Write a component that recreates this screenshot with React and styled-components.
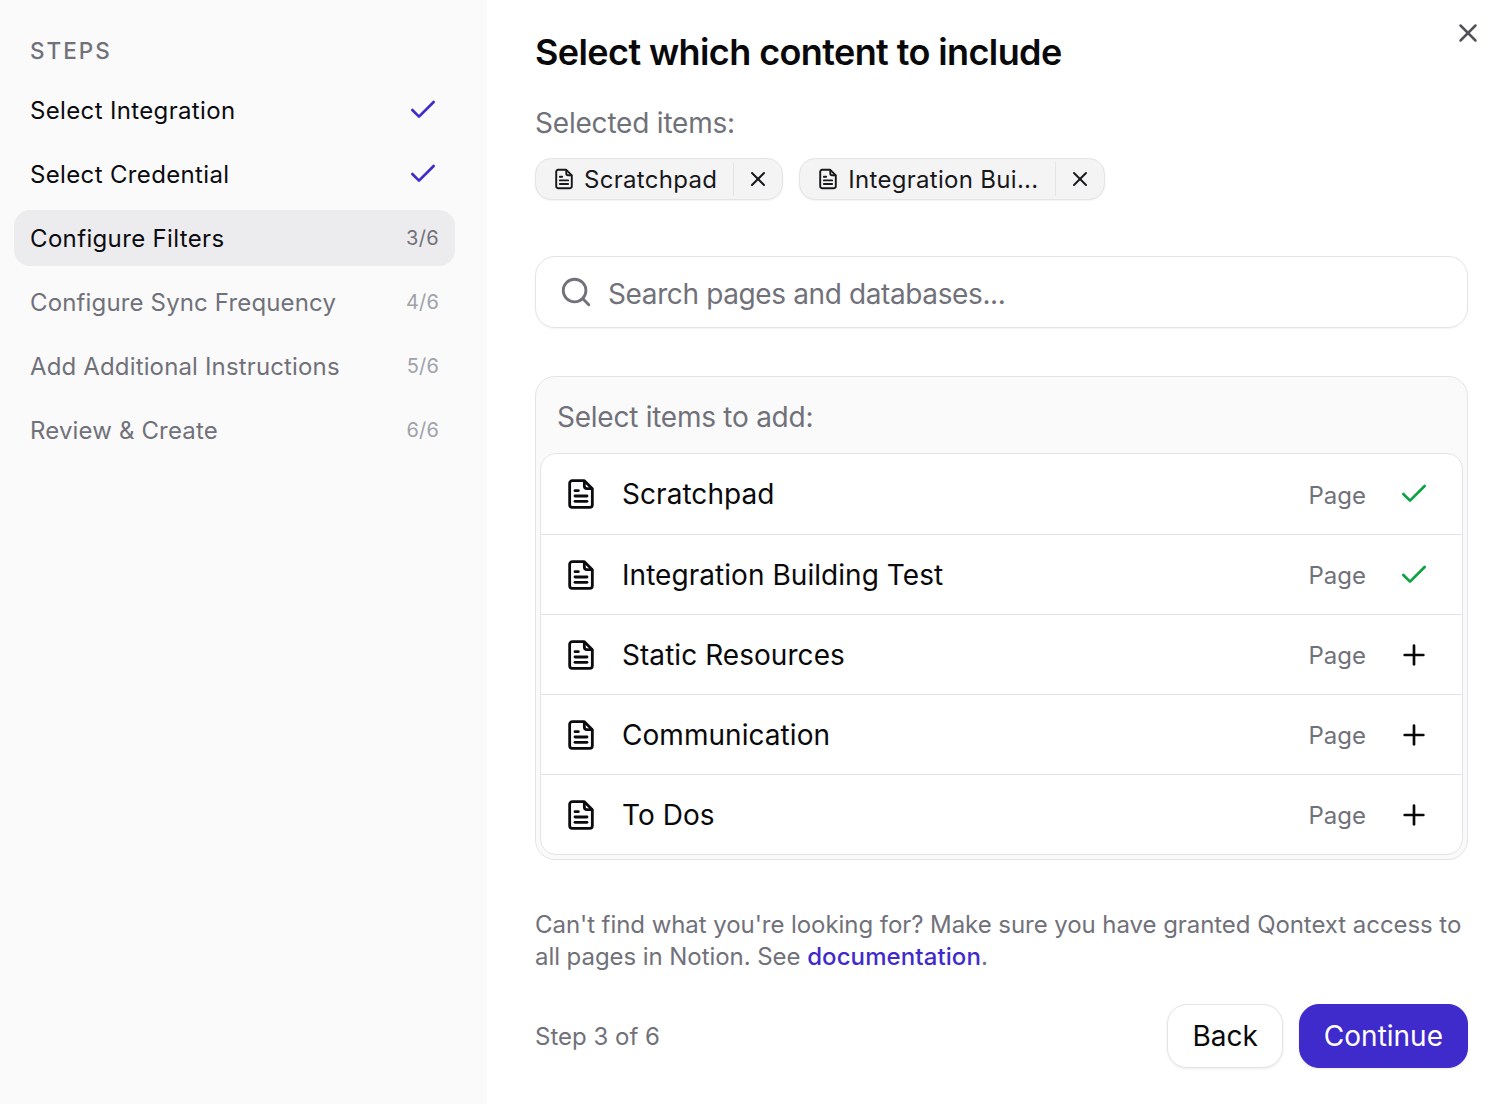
import styled, { createGlobalStyle } from "styled-components";
import { Check, Plus, Search, X } from "lucide-react";

const GlobalStyle = createGlobalStyle`
  * {
    box-sizing: border-box;
  }
  body {
    margin: 0;
    background: #fff;
    font-family: Inter, "Liberation Sans", sans-serif;
    color: #0b0b0f;
  }
`;

const Page = styled.div`
  display: flex;
  height: 1104px;
  position: relative;
  overflow: hidden;
`;

/* Left column */
const Sidebar = styled.aside`
  width: 487px;
  flex-shrink: 0;
  background: #fafafa;
  padding: 34px 32px 0 14px;
`;

const StepsTitle = styled.h2`
  margin: 0 0 14px 16px;
  font-size: 22.5px;
  line-height: 34px;
  font-weight: 500;
  letter-spacing: 2px;
  color: #71717a;
`;

const StepList = styled.div`
  display: flex;
  flex-direction: column;
  gap: 8px;
`;

const StepRow = styled.div`
  height: 56px;
  padding: 0 16px;
  display: flex;
  align-items: center;
  justify-content: space-between;
  border-radius: 16px;
  font-size: 24px;
  letter-spacing: ${(props) => (props.$muted ? "0.15px" : "0.35px")};
  color: ${(props) => (props.$muted ? "#71717a" : "#0b0b0f")};
  background: ${(props) => (props.$active ? "#ececee" : "transparent")};
`;

const StepCount = styled.span`
  font-size: 20px;
  color: ${(props) => (props.$muted ? "#a1a1aa" : "#71717a")};
`;

const StepCheck = styled(Check)`
  width: 32px;
  height: 32px;
  color: #3f2bcb;
`;

/* Right column */
const Main = styled.main`
  flex: 1;
  padding: 28px 39px 0 48px;
  display: flex;
  flex-direction: column;
`;

const Heading = styled.h1`
  margin: 0;
  font-size: 36px;
  line-height: 48px;
  font-weight: 600;
  letter-spacing: -0.6px;
  color: #09090b;
`;

const CloseButton = styled.button`
  position: absolute;
  top: 16px;
  right: 22px;
  width: 34px;
  height: 34px;
  padding: 0;
  border: 0;
  background: none;
  color: #52525b;
  display: flex;
  align-items: center;
  justify-content: center;
`;

const SelectedLabel = styled.div`
  margin-top: 27px;
  font-size: 28px;
  line-height: 40px;
  letter-spacing: -0.2px;
  color: #71717a;
`;

const Chips = styled.div`
  margin-top: 15px;
  display: flex;
  gap: 16px;
`;

const Chip = styled.div`
  height: 42px;
  padding: 0 12px 0 17px;
  display: flex;
  align-items: center;
  background: #f4f4f5;
  border: 1px solid #e4e4e7;
  border-radius: 16px;
  box-shadow: 0 1px 2px rgba(0, 0, 0, 0.05);
  font-size: 24px;
  color: #18181b;
`;

const ChipLabel = styled.span`
  margin-left: 9px;
  padding-right: 16px;
  letter-spacing: 0.3px;
`;

const ChipRemove = styled.span`
  height: 34px;
  padding-left: 12px;
  border-left: 1px solid #e4e4e7;
  display: flex;
  align-items: center;
  color: #18181b;
`;

const SearchBox = styled.div`
  margin-top: 56px;
  height: 72px;
  padding: 0 23px;
  display: flex;
  align-items: center;
  gap: 15px;
  border: 1px solid #e4e4e7;
  border-radius: 20px;
  box-shadow: 0 1px 2px rgba(0, 0, 0, 0.05);
  color: #71717a;
`;

const SearchText = styled.span`
  padding-top: 3px;
  font-size: 28px;
  letter-spacing: -0.38px;
`;

const Panel = styled.section`
  margin-top: 48px;
  height: 484px;
  padding: 0 4px 4px;
  display: flex;
  flex-direction: column;
  background: #fafafa;
  border: 1px solid #e4e4e7;
  border-radius: 20px;
`;

const PanelTitle = styled.div`
  height: 76px;
  padding: 4px 0 0 17px;
  display: flex;
  align-items: center;
  font-size: 28px;
  letter-spacing: -0.25px;
  color: #71717a;
`;

const ItemList = styled.div`
  flex: 1;
  background: #fff;
  border: 1px solid #e4e4e7;
  border-radius: 16px;
`;

const ItemRow = styled.div`
  height: 80px;
  padding: 0 32px 0 24px;
  display: flex;
  align-items: center;
  border-top: 1px solid #e4e4e7;

  &:first-child {
    border-top: 0;
  }
`;

const ItemName = styled.span`
  flex: 1;
  margin-left: 25px;
  font-size: 28px;
  letter-spacing: 0.05px;
  color: #09090b;
`;

const ItemType = styled.span`
  margin: 2px 32px 0 0;
  font-size: 24px;
  color: #71717a;
`;

const ItemAction = styled.span`
  width: 32px;
  height: 32px;
  display: flex;
  color: ${(props) => (props.$added ? "#0ba342" : "#09090b")};
`;

const HelpText = styled.p`
  margin: 49px 0 0;
  font-size: 24px;
  line-height: 32px;
  letter-spacing: -0.06px;
  color: #71717a;
`;

const DocLink = styled.a`
  color: #3f2bcb;
  font-weight: 500;
  letter-spacing: 0.1px;
`;

const Footer = styled.div`
  margin-top: 31px;
  display: flex;
  align-items: center;
  gap: 16px;
`;

const StepNote = styled.span`
  flex: 1;
  font-size: 24px;
  color: #71717a;
`;

const Button = styled.button`
  height: 64px;
  padding: 0 24px;
  border-radius: 20px;
  font-family: inherit;
  font-size: 28px;
  font-weight: 400;
  border: 1px solid ${(props) => (props.$primary ? "#3f2bcb" : "#e4e4e7")};
  background: ${(props) => (props.$primary ? "#3f2bcb" : "#fff")};
  color: ${(props) => (props.$primary ? "#fff" : "#09090b")};
  box-shadow: 0 1px 3px rgba(0, 0, 0, 0.08);
`;

function DocIcon({ size }) {
  return (
    <svg width={size} height={size} viewBox="0 0 24 24" fill="none" stroke="currentColor" strokeWidth="2.1" strokeLinecap="round" strokeLinejoin="round">
      <path d="M14.5 2H5.5a2 2 0 0 0-2 2v16a2 2 0 0 0 2 2h13a2 2 0 0 0 2-2V8z" />
      <path d="M14.5 2.5V6a2 2 0 0 0 2 2h3.5" />
      <path d="M7.5 9.5h2.5" />
      <path d="M7.5 13.5h9" />
      <path d="M7.5 17.5h9" />
    </svg>
  );
}

const steps = [
  { label: "Select Integration", done: true },
  { label: "Select Credential", done: true },
  { label: "Configure Filters", count: "3/6", active: true },
  { label: "Configure Sync Frequency", count: "4/6" },
  { label: "Add Additional Instructions", count: "5/6" },
  { label: "Review & Create", count: "6/6" },
];

const items = [
  { name: "Scratchpad", added: true },
  { name: "Integration Building Test", added: true },
  { name: "Static Resources" },
  { name: "Communication" },
  { name: "To Dos" },
];

export default function App() {
  return (
    <Page>
      <GlobalStyle />
      <Sidebar>
        <StepsTitle>STEPS</StepsTitle>
        <StepList>
          {steps.map((step) => {
            const muted = !step.done && !step.active;
            return (
              <StepRow key={step.label} $active={step.active} $muted={muted}>
                {step.label}
                {step.done ? (
                  <StepCheck strokeWidth={2} />
                ) : (
                  <StepCount $muted={muted}>{step.count}</StepCount>
                )}
              </StepRow>
            );
          })}
        </StepList>
      </Sidebar>

      <Main>
        <Heading>Select which content to include</Heading>
        <CloseButton aria-label="Close">
          <X size={30} strokeWidth={2} />
        </CloseButton>

        <SelectedLabel>Selected items:</SelectedLabel>
        <Chips>
          <Chip>
            <DocIcon size={22} />
            <ChipLabel>Scratchpad</ChipLabel>
            <ChipRemove>
              <X size={24} strokeWidth={2} />
            </ChipRemove>
          </Chip>
          <Chip>
            <DocIcon size={22} />
            <ChipLabel>Integration Bui...</ChipLabel>
            <ChipRemove>
              <X size={24} strokeWidth={2} />
            </ChipRemove>
          </Chip>
        </Chips>

        <SearchBox>
          <Search size={34} strokeWidth={2} />
          <SearchText>Search pages and databases...</SearchText>
        </SearchBox>

        <Panel>
          <PanelTitle>Select items to add:</PanelTitle>
          <ItemList>
            {items.map((item) => (
              <ItemRow key={item.name}>
                <DocIcon size={32} />
                <ItemName>{item.name}</ItemName>
                <ItemType>Page</ItemType>
                <ItemAction $added={item.added}>
                  {item.added ? <Check size={32} /> : <Plus size={32} />}
                </ItemAction>
              </ItemRow>
            ))}
          </ItemList>
        </Panel>

        <HelpText>
          Can't find what you're looking for? Make sure you have granted Qontext access to all pages
          in Notion. See <DocLink>documentation</DocLink>.
        </HelpText>

        <Footer>
          <StepNote>Step 3 of 6</StepNote>
          <Button>Back</Button>
          <Button $primary>Continue</Button>
        </Footer>
      </Main>
    </Page>
  );
}
